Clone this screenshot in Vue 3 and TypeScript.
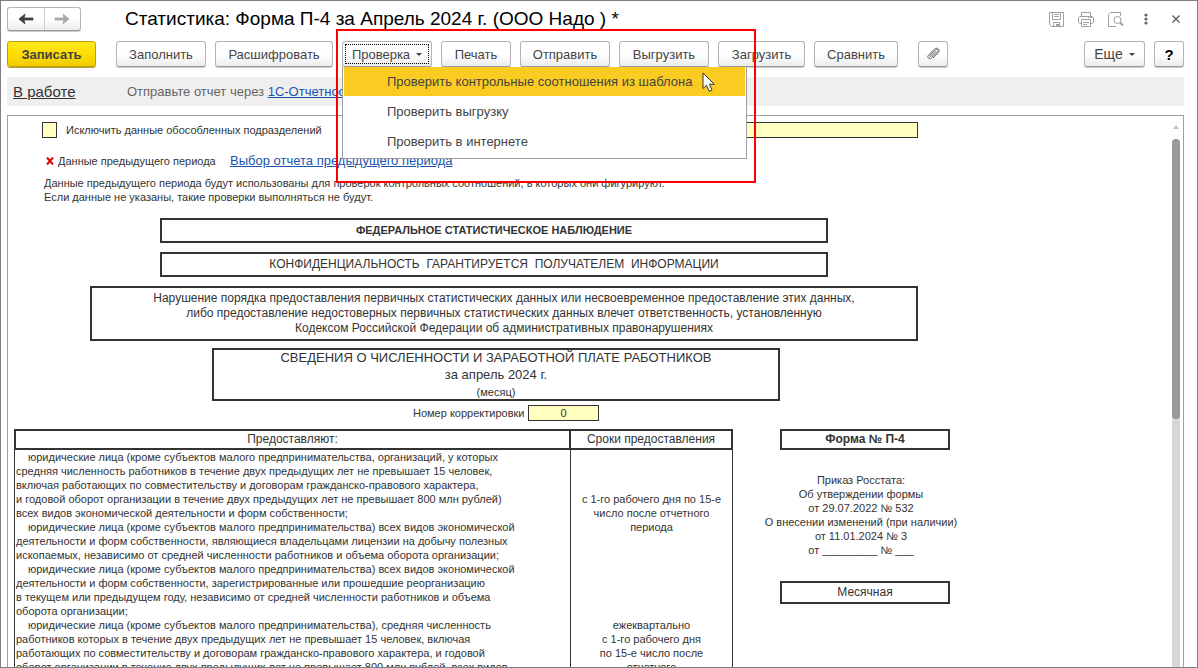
<script setup lang="ts">
import { ref } from 'vue'

interface Command {
  label: string
  size: string
}

const before: Command[] = [
  { label: 'Заполнить', size: 'w-mid' },
  { label: 'Расшифровать', size: 'w-wide' },
]
const after: Command[] = [
  { label: 'Печать', size: 'w-short' },
  { label: 'Отправить', size: 'w-mid' },
  { label: 'Выгрузить', size: 'w-mid' },
  { label: 'Загрузить', size: 'w-load' },
  { label: 'Сравнить', size: 'w-small' },
]
const checks: string[] = [
  'Проверить контрольные соотношения из шаблона',
  'Проверить выгрузку',
  'Проверить в интернете',
]
const activeCheck = ref(0)
const excludeBranches = ref(false)
const branchInfo = ref('')
const correction = ref('0')

const monthly: string[][] = [
  [
    'юридические лица (кроме субъектов малого предпринимательства, организаций, у которых',
    'средняя численность работников в течение двух предыдущих лет не превышает 15 человек,',
    'включая работающих по совместительству и договорам гражданско-правового характера,',
    'и годовой оборот организации в течение двух предыдущих лет не превышает 800 млн рублей)',
    'всех видов экономической деятельности и форм собственности;',
  ],
  [
    'юридические лица (кроме субъектов малого предпринимательства) всех видов экономической',
    'деятельности и форм собственности, являющиеся владельцами лицензии на добычу полезных',
    'ископаемых, независимо от средней численности работников и объема оборота организации;',
  ],
  [
    'юридические лица (кроме субъектов малого предпринимательства) всех видов экономической',
    'деятельности и форм собственности, зарегистрированные или прошедшие реорганизацию',
    'в текущем или предыдущем году, независимо от средней численности работников и объема',
    'оборота организации;',
  ],
]
const quarterly: string[] = [
  'юридические лица (кроме субъектов малого предпринимательства), средняя численность',
  'работников которых в течение двух предыдущих лет не превышает 15 человек, включая',
  'работающих по совместительству и договорам гражданско-правового характера, и годовой',
  'оборот организации в течение двух предыдущих лет не превышает 800 млн рублей, всех видов',
]
</script>

<template>
  <div class="window">
    <header class="titlebar">
      <div class="history">
        <button type="button" aria-label="Назад">
          <svg width="16" height="12" viewBox="0 0 16 12"><path d="M1 6L7 1L6 5H15V7H6L7 11Z" fill="#404040" stroke="#404040" stroke-width=".8" /></svg>
        </button>
        <button type="button" aria-label="Вперед">
          <svg width="16" height="12" viewBox="0 0 16 12"><path d="M15 6L9 1L10 5H1V7H10L9 11Z" fill="#a9a9a9" stroke="#a9a9a9" stroke-width=".8" /></svg>
        </button>
      </div>
      <h1>Статистика: Форма П-4 за Апрель 2024 г. (ООО Надо ) *</h1>
      <div class="tools">
        <button type="button" aria-label="Сохранить">
          <svg width="15" height="15" viewBox="0 0 15 15" fill="none" stroke="#a0a0a0">
            <path d="M.5 .5H14.5V14.5H2.5L.5 12.5Z M3.5 .5V7.5H11.5V.5 M5 2.5H10 M5 4.5H10 M4.5 14.5V10.5H10.5V14.5" />
            <rect x="7" y="12" width="3" height="2" fill="#a0a0a0" stroke="none" />
          </svg>
        </button>
        <button type="button" aria-label="Печать документа">
          <svg width="16" height="15" viewBox="0 0 16 15" fill="none" stroke="#a0a0a0">
            <path d="M3.5 4V.5H12.5V4 M3.5 11.5H1.5L.5 10.5V5.5L1.5 4.5H14.5L15.5 5.5V10.5L14.5 11.5H12.5 M3.5 7.5H12.5V14.5H3.5Z M5 10.5H11 M5 12.5H9 M10 5.5H11 M12 5.5H14" />
          </svg>
        </button>
        <button type="button" aria-label="Просмотр">
          <svg width="16" height="15" viewBox="0 0 16 15" fill="none" stroke="#a0a0a0">
            <path d="M12.5 4V.5H2.5L.5 2.5V14.5H8" />
            <circle cx="9.5" cy="8" r="3.5" />
            <path d="M12 10.5L15 13.5" stroke-width="2" />
          </svg>
        </button>
        <button type="button" aria-label="Дополнительно">
          <svg width="4" height="12" viewBox="0 0 4 12" fill="#666"><circle cx="2" cy="2" r="1.6" /><circle cx="2" cy="6" r="1.6" /><circle cx="2" cy="10" r="1.6" /></svg>
        </button>
        <button type="button" aria-label="Закрыть">
          <svg width="8" height="8" viewBox="0 0 8 8" stroke="#555" stroke-width="1.2"><path d="M.5 .5L7.5 7.5M7.5 .5L.5 7.5" /></svg>
        </button>
      </div>
    </header>

    <div class="toolbar">
      <button type="button" class="btn primary">Записать</button>
      <button v-for="c in before" :key="c.label" type="button" class="btn" :class="c.size">{{ c.label }}</button>
      <div class="dropdown">
        <button type="button" class="btn w-mid focused" aria-haspopup="menu" aria-expanded="true">
          Проверка<span class="caret"></span>
        </button>
        <div class="menu" role="menu">
          <button
            v-for="(item, i) in checks"
            :key="item"
            type="button"
            role="menuitem"
            :class="{ active: i === activeCheck }"
            @mouseenter="activeCheck = i"
          >{{ item }}</button>
        </div>
      </div>
      <button v-for="c in after" :key="c.label" type="button" class="btn" :class="c.size">{{ c.label }}</button>
      <button type="button" class="btn square clip" aria-label="Вложения">
        <svg width="14" height="14" viewBox="0 0 14 14" fill="none" stroke="#666">
          <path d="M9.8 4.4L4.9 9.3C4.2 10 3.3 9.2 4 8.4L9.6 2.8C11 1.5 12.9 3.2 11.6 4.7L5.4 11C3.3 12.9 .6 10.4 2.4 8.2L8.6 2C11.2-.3 14.6 3 12.3 5.6L7 11" />
        </svg>
      </button>
      <button type="button" class="btn more">Еще<span class="caret"></span></button>
      <button type="button" class="btn square help">?</button>
    </div>

    <div class="status">
      <a href="#" class="state">В работе</a>
      <p>Отправьте отчет через <a href="#">1С-Отчетность</a></p>
    </div>

    <main class="frame">
      <div class="sheet">
        <div class="exclude">
          <input id="exclude" v-model="excludeBranches" type="checkbox" />
          <label for="exclude">Исключить данные обособленных подразделений</label>
          <input v-model="branchInfo" type="text" class="branch" aria-label="Обособленное подразделение" />
        </div>
        <div class="previous">
          <svg width="8" height="8" viewBox="0 0 8 8" stroke="#e00000" stroke-width="2"><path d="M1 .5L7 7.5M7 .5L1 7.5" /></svg>
          <span>Данные предыдущего периода</span>
          <a href="#">Выбор отчета предыдущего периода</a>
        </div>
        <p class="note">
          Данные предыдущего периода будут использованы для проверок контрольных соотношений, в которых они фигурируют.<br />
          Если данные не указаны, такие проверки выполняться не будут.
        </p>

        <div class="box narrow heading">ФЕДЕРАЛЬНОЕ СТАТИСТИЧЕСКОЕ НАБЛЮДЕНИЕ</div>
        <div class="box narrow">КОНФИДЕНЦИАЛЬНОСТЬ&nbsp; ГАРАНТИРУЕТСЯ&nbsp; ПОЛУЧАТЕЛЕМ&nbsp; ИНФОРМАЦИИ</div>
        <div class="box warning">
          Нарушение порядка предоставления первичных статистических данных или несвоевременное предоставление этих данных,<br />
          либо предоставление недостоверных первичных статистических данных влечет ответственность, установленную<br />
          Кодексом Российской Федерации об административных правонарушениях
        </div>
        <div class="box subject">
          <div class="name">СВЕДЕНИЯ О ЧИСЛЕННОСТИ И ЗАРАБОТНОЙ ПЛАТЕ РАБОТНИКОВ</div>
          <div class="period">за апрель 2024 г.</div>
          <div class="unit">(месяц)</div>
        </div>
        <div class="correction">
          <label for="correction">Номер корректировки</label>
          <input id="correction" v-model="correction" type="text" />
        </div>

        <div class="columns">
          <table>
            <colgroup><col class="who" /><col class="when" /></colgroup>
            <thead>
              <tr><th scope="col">Предоставляют:</th><th scope="col">Сроки предоставления</th></tr>
            </thead>
            <tbody>
              <tr>
                <td>
                  <p v-for="(para, i) in monthly" :key="i"><template v-for="line in para" :key="line">{{ line }}<br /></template></p>
                </td>
                <td class="term late">с 1-го рабочего дня по 15-е<br />число после отчетного<br />периода</td>
              </tr>
              <tr>
                <td>
                  <p><template v-for="line in quarterly" :key="line">{{ line }}<br /></template></p>
                </td>
                <td class="term">ежеквартально<br />с 1-го рабочего дня<br />по 15-е число после<br />отчетного</td>
              </tr>
            </tbody>
          </table>
          <aside>
            <div class="tag strong">Форма № П-4</div>
            <p>
              Приказ Росстата:<br />Об утверждении формы<br />от 29.07.2022 № 532<br />О внесении изменений (при наличии)<br />от 11.01.2024 № 3<br />от _________ № ___
            </p>
            <div class="tag tall">Месячная</div>
          </aside>
        </div>
      </div>
      <div class="scrollbar">
        <span class="up"></span>
        <div class="track"><div class="thumb"></div></div>
      </div>
    </main>

    <div class="highlight"></div>
    <svg class="pointer" width="14" height="21" viewBox="0 0 14 21">
      <path d="M1 1V16.5L4.5 13.3L7.2 19.3L10 18L7.4 12.3H12.3Z" fill="#fff" stroke="#333" />
    </svg>
  </div>
</template>

<style>
html,
body,
#app {
  height: 100%;
}
</style>

<style scoped>
* {
  box-sizing: border-box;
}
.window {
  position: relative;
  display: flex;
  flex-direction: column;
  height: 100%;
  padding: 6px 13px 0 6px;
  border: 1px solid #808080;
  background: #fff;
  color: #333;
  font: 13px/15px 'Liberation Sans', Arial, sans-serif;
  overflow: hidden;
}
button,
input {
  font: inherit;
  color: inherit;
}
button {
  padding: 0;
  border: 0;
  background: none;
}
p,
h1 {
  margin: 0;
}
a {
  color: #1a54b0;
}
.titlebar {
  display: flex;
  align-items: center;
  height: 24px;
}
.history {
  display: flex;
  width: 74px;
  height: 24px;
  border: 1px solid #b4b4b4;
  border-bottom-color: #999;
  border-radius: 3px;
  background: linear-gradient(#fff 50%, #ececec);
  box-shadow: 0 1px #ccc;
}
.history button {
  display: flex;
  flex: 1;
  align-items: center;
  justify-content: center;
}
.history button + button {
  border-left: 1px solid #ccc;
}
h1 {
  flex: 1;
  margin-left: 44px;
  color: #000;
  font-size: 19px;
  font-weight: 400;
  line-height: 24px;
  white-space: nowrap;
}
.tools {
  display: flex;
  align-items: center;
}
.tools button {
  display: flex;
  align-items: center;
  justify-content: center;
  width: 30px;
  height: 24px;
}
.tools button:last-child {
  margin-right: -7px;
}
.toolbar {
  display: flex;
  gap: 9px;
  margin-top: 10px;
}
.btn {
  display: flex;
  flex: none;
  align-items: center;
  justify-content: center;
  height: 26px;
  border: 1px solid #b4b4b4;
  border-bottom-color: #999;
  border-radius: 3px;
  background: linear-gradient(#fff 50%, #ececec);
  box-shadow: 0 1px #ccc;
  color: #444;
  font-size: 13px;
}
.w-short {
  width: 70px;
}
.w-small {
  width: 84px;
}
.w-load {
  width: 87px;
}
.w-mid {
  width: 90px;
}
.w-wide {
  width: 118px;
}
.primary {
  width: 89px;
  margin-right: 11px;
  border-color: #c0a000;
  background: linear-gradient(#ffe61f, #ffdd00 50%, #efcd00);
  box-shadow: 0 1px #b8a040;
  font-weight: 700;
}
.square {
  width: 30px;
}
.clip {
  margin-left: 11px;
}
.more {
  width: 61px;
  margin-left: auto;
  font-size: 14px;
}
.help {
  color: #000;
  font-size: 15px;
  font-weight: 700;
}
.caret {
  margin-left: 6px;
  border: 3px solid transparent;
  border-top-color: #444;
  border-bottom: 0;
}
.dropdown {
  position: relative;
}
.focused {
  outline: 1px dotted #000;
  outline-offset: -4px;
}
.menu {
  position: absolute;
  z-index: 2;
  top: 26px;
  left: 0;
  width: 405px;
  padding: 0 1px 1px;
  border: 1px solid #a0a0a0;
  border-top: 0;
  background: #fff;
}
.menu button {
  display: block;
  width: 100%;
  height: 29px;
  margin-bottom: 1px;
  padding-left: 43px;
  color: #444;
  text-align: left;
}
.menu .active {
  background: #facc22;
}
.status {
  display: flex;
  align-items: center;
  height: 29px;
  margin-top: 10px;
  padding-left: 6px;
  background: #efefef;
}
.state {
  width: 114px;
  color: #333;
  font-size: 15px;
}
.status p {
  color: #666;
}
.frame {
  display: flex;
  flex: 1;
  min-height: 0;
  margin-top: 9px;
  padding-right: 3px;
  border: 1px solid #a0a0a0;
  border-bottom: 0;
  overflow: hidden;
}
.sheet {
  flex: 1;
  padding: 6px 0 0 6px;
  font-size: 11px;
  line-height: 14px;
}
.exclude,
.previous,
.correction {
  display: flex;
  align-items: center;
  height: 16px;
}
.exclude input,
.correction input {
  margin: 0;
  padding: 0;
  border: 1px solid #333;
  border-radius: 0;
  background: #ffffc0;
  appearance: none;
}
.exclude input[type='checkbox'] {
  width: 15px;
  height: 16px;
  margin: 0 9px 0 28px;
}
.exclude label {
  width: 280px;
}
.exclude .branch {
  width: 572px;
  height: 16px;
}
.previous {
  margin-top: 15px;
  padding-left: 32px;
}
.previous span {
  width: 172px;
  margin-left: 4px;
}
.previous a {
  font-size: 13px;
}
.note {
  margin: 7px 0 14px 30px;
  white-space: nowrap;
}
.box {
  border: 2px solid #333;
  text-align: center;
  white-space: nowrap;
}
.strong {
  font-weight: 700;
}
.narrow {
  width: 668px;
  margin: 0 0 9px 146px;
  font-size: 12px;
  line-height: 21px;
}
.heading {
  font-size: 11px;
  font-weight: 700;
}
.warning {
  width: 828px;
  margin-left: 76px;
  padding: 3px 0;
  font-size: 12px;
  line-height: 15px;
}
.subject {
  width: 568px;
  margin: 7px 0 4px 198px;
}
.name {
  font-size: 13px;
  line-height: 15px;
}
.period {
  font-size: 13px;
  line-height: 20px;
}
.correction {
  margin-left: 399px;
}
.correction label {
  width: 115px;
}
.correction input {
  width: 71px;
  height: 16px;
  text-align: center;
}
.columns {
  display: flex;
  align-items: flex-start;
  gap: 47px;
  margin-top: 8px;
}
table {
  width: 719px;
  border-spacing: 0;
  table-layout: fixed;
}
.who {
  width: 557px;
}
th {
  padding: 0;
  border: 2px solid #333;
  font-size: 12px;
  font-weight: 400;
  line-height: 17px;
}
th + th {
  border-left: 0;
}
td {
  padding: 0 1px;
  border: solid #333;
  border-width: 0 1px;
  vertical-align: top;
  white-space: nowrap;
}
td p {
  text-indent: 12px;
}
.term {
  border-left: 0;
  text-align: center;
}
.late {
  padding-top: 42px;
}
aside {
  width: 170px;
}
.tag {
  border: 2px solid #333;
  font-size: 12px;
  line-height: 17px;
  text-align: center;
}
aside p {
  margin: 23px -12px 24px -20px;
  text-align: center;
  white-space: nowrap;
}
.tall {
  line-height: 19px;
}
.scrollbar {
  display: flex;
  flex-direction: column;
  align-items: center;
  width: 8px;
  padding-top: 9px;
}
.up {
  border: 3px solid transparent;
  border-top: 0;
  border-bottom: 4px solid #c0c0c0;
}
.track {
  flex: 1;
  width: 8px;
  margin-top: 10px;
  border-radius: 4px 4px 0 0;
  background: #d6d6d6;
}
.thumb {
  height: 53%;
  border-radius: 4px;
  background: #999;
}
.highlight {
  position: absolute;
  z-index: 3;
  top: 28px;
  left: 335px;
  width: 420px;
  height: 154px;
  border: 2px solid #f00;
  pointer-events: none;
}
.pointer {
  position: absolute;
  z-index: 4;
  top: 71px;
  left: 701px;
  pointer-events: none;
}
</style>
